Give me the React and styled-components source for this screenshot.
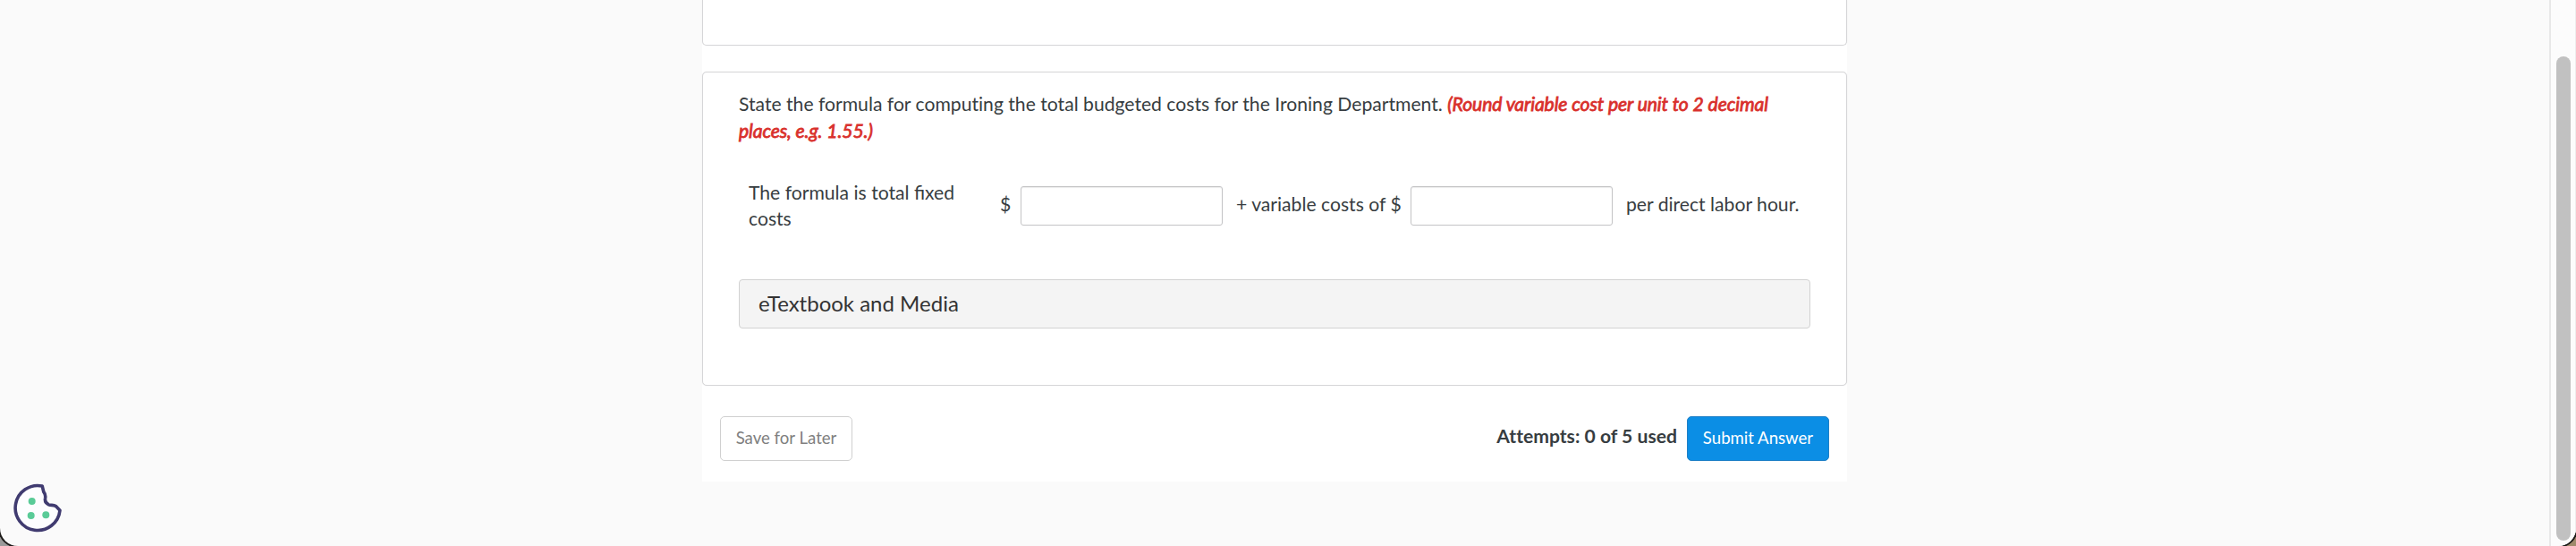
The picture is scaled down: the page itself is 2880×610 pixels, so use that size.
import { useState } from "react";
import styled, { createGlobalStyle } from "styled-components";

const GlobalStyle = createGlobalStyle`
  * {
    box-sizing: border-box;
  }
  body {
    margin: 0;
    background: linear-gradient(to right, #9a9a9a, #a08a6c);
    font-family: Lato, "Open Sans", sans-serif;
  }
`;
const Window = styled.div`
  position: relative;
  display: flex;
  height: 610px;
  overflow: hidden;
  background: #fafafa;
  border-radius: 0 0 20px 20px;
  box-shadow: 0 0 0 2px #1c1a18;
`;
const Page = styled.main`
  flex: 1;
  padding-left: 785px;
`;
const Column = styled.div`
  width: 1280px;
  height: 538px;
  background: white;
`;
const Card = styled.section`
  background: white;
  border: 1px solid #d6d6d8;
  border-radius: 5px;
  box-shadow: 0 0 1px rgba(0, 0, 0, 0.12);
`;
const PreviousCard = styled(Card)`
  height: 51px;
  border-top: none;
  border-radius: 0 0 5px 5px;
  margin-bottom: 29px;
`;
const QuestionCard = styled(Card)`
  height: 351px;
  padding: 20px 39px 0 40px;
`;
const Question = styled.p`
  margin: 0;
  height: 60px;
  color: #373d41;
  font-size: 21.15px;
  font-variant-ligatures: none;
  line-height: 30px;
`;
const Hint = styled.em`
  color: #d9302c;
  letter-spacing: -0.1px;
  -webkit-text-stroke: 0.8px #d9302c;
`;
const Formula = styled.div`
  display: flex;
  align-items: center;
  height: 60px;
  margin-top: 39px;
  padding-left: 11px;
  color: #373d41;
  font-size: 21.15px;
  line-height: 29px;
  white-space: nowrap;
`;
const Label = styled.span`
  width: ${(props) => props.width}px;
  padding-left: ${(props) => props.indent || 0}px;
  padding-bottom: 4px;
`;
const WrappedLabel = styled(Label)`
  padding-right: 20px;
  padding-bottom: 0;
  white-space: normal;
`;
const AnswerInput = styled.input`
  width: 226px;
  height: 44px;
  padding: 0 12px;
  border: 1px solid #c4c4c6;
  border-radius: 3px;
  background: white;
  box-shadow: inset 0 1px 1px rgba(0, 0, 0, 0.08);
  font: inherit;
`;
const MediaButton = styled.button`
  display: block;
  width: 1198px;
  height: 55px;
  margin-top: 52px;
  padding: 0 21px 2px;
  border: 1px solid #d2d2d2;
  border-radius: 4px;
  background: #f4f4f4;
  color: #333333;
  font: inherit;
  font-size: 24px;
  text-align: left;
`;
const Footer = styled.footer`
  display: flex;
  justify-content: space-between;
  padding: 34px 20px 0;
`;
const Button = styled.button`
  width: ${(props) => props.width}px;
  height: 50px;
  padding: 0 0 2px;
  border: 1px solid ${(props) => (props.primary ? "#2080c6" : "#d0d0d0")};
  border-radius: 5px;
  background: ${(props) => (props.primary ? "#0b8ee5" : "white")};
  color: ${(props) => (props.primary ? "white" : "#808080")};
  font: inherit;
  font-size: 18.6px;
`;
const Actions = styled.div`
  display: flex;
`;
const Attempts = styled.strong`
  margin-right: 11px;
  color: #373d41;
  font-size: 21.15px;
  font-variant-ligatures: none;
  line-height: 44px;
`;
const ScrollTrack = styled.div`
  width: 30px;
  padding: 63px 5px 0 6px;
  border-left: 2px solid #e8e8e8;
  border-right: 1px solid #eeeeee;
  background: #fcfcfc;
`;
const ScrollThumb = styled.div`
  width: 16px;
  height: 541px;
  border-radius: 8px;
  background: #c1c1c1;
`;
const CookieButton = styled.button`
  position: absolute;
  left: 15px;
  bottom: 14px;
  width: 56px;
  height: 56px;
  padding: 0;
  border: none;
  background: none;
`;

const CookieIcon = () => (
  <svg width="56" height="56" viewBox="0 0 56 56" fill="none">
    <path
      d="M32.2 3A25 25 0 1 0 52 30.2L47.5 25.6C44.5 23.6 42.5 25 39.5 23.8C36.5 22.5 35 19.5 35.6 16.5C36 14 35.5 11.5 33.8 9.5Z"
      fill="#fdfdff"
      stroke="#403b70"
      strokeWidth="3.6"
      strokeLinejoin="round"
    />
    <circle cx="20.7" cy="20" r="4" fill="#5acb98" />
    <circle cx="19.7" cy="36" r="4" fill="#5acb98" />
    <circle cx="36.3" cy="35.3" r="4" fill="#5acb98" />
  </svg>
);

const App = () => {
  const [fixed, setFixed] = useState("");
  const [variable, setVariable] = useState("");

  return (
    <>
      <GlobalStyle />
      <Window>
        <Page>
          <Column>
            <PreviousCard />
            <QuestionCard>
              <Question>
                State the formula for computing the total budgeted costs for the
                Ironing Department.{" "}
                <Hint>
                  (Round variable cost per unit to 2 decimal places, e.g. 1.55.)
                </Hint>
              </Question>
              <Formula>
                <WrappedLabel width={281}>
                  The formula is total fixed costs
                </WrappedLabel>
                <Label width={23}>$</Label>
                <AnswerInput
                  value={fixed}
                  onChange={(event) => setFixed(event.target.value)}
                />
                <Label width={210} indent={15}>
                  + variable costs of $
                </Label>
                <AnswerInput
                  value={variable}
                  onChange={(event) => setVariable(event.target.value)}
                />
                <Label indent={15}>per direct labor hour.</Label>
              </Formula>
              <MediaButton>eTextbook and Media</MediaButton>
            </QuestionCard>
            <Footer>
              <Button width={148}>Save for Later</Button>
              <Actions>
                <Attempts>Attempts: 0 of 5 used</Attempts>
                <Button primary="true" width={159}>
                  Submit Answer
                </Button>
              </Actions>
            </Footer>
          </Column>
        </Page>
        <ScrollTrack>
          <ScrollThumb />
        </ScrollTrack>
        <CookieButton aria-label="Cookie settings">
          <CookieIcon />
        </CookieButton>
      </Window>
    </>
  );
};

export default App;
